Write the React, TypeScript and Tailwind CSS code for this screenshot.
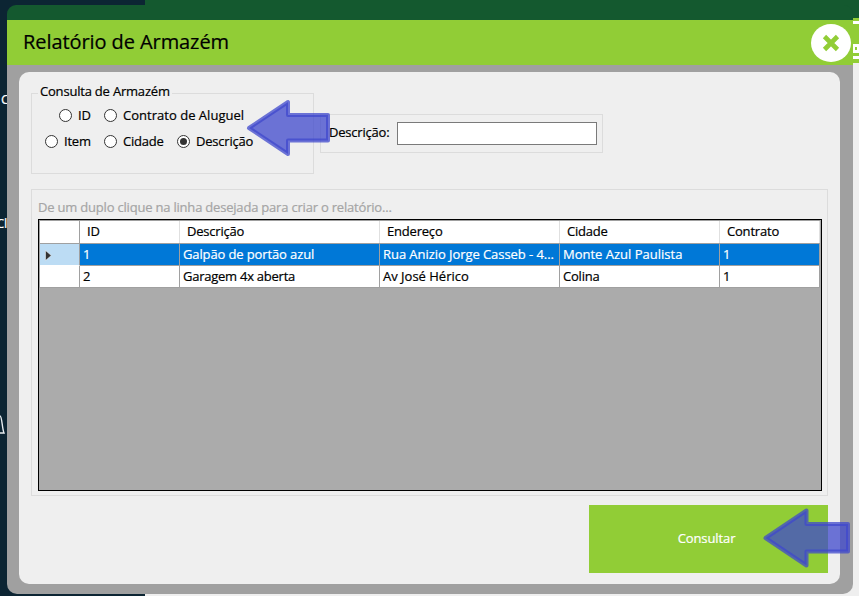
import React from "react";

const Radio = ({ checked = false }: { checked?: boolean }) => (
  <span className="flex h-[13px] w-[13px] shrink-0 items-center justify-center rounded-full border border-[#333] bg-white">
    {checked && <span className="h-[7px] w-[7px] rounded-full bg-[#333]" />}
  </span>
);

const Option = ({ label, className, checked }: { label: string; className: string; checked?: boolean }) => (
  <label className={`flex h-[18px] items-center gap-[6px] whitespace-nowrap ${className}`}>
    <Radio checked={checked} />
    <span>{label}</span>
  </label>
);

const Arrow = ({ className, path }: { className: string; path: string }) => (
  <svg className={`absolute ${className}`} width="90" height="64" viewBox="0 0 90 64">
    <path
      d={path}
      fill="#3f48cc"
      fillOpacity=".75"
      stroke="#3f48cc"
      strokeOpacity=".75"
      strokeWidth="4"
      strokeLinejoin="round"
    />
  </svg>
);

const columns = "grid grid-cols-[40px_100px_200px_180px_160px_100px]";
const headers = ["ID", "Descrição", "Endereço", "Cidade", "Contrato"];
const rows = [
  ["1", "Galpão de portão azul", "Rua Anizio Jorge Casseb - 4...", "Monte Azul Paulista", "1"],
  ["2", "Garagem 4x aberta", "Av José Hérico", "Colina", "1"],
];
const tracking = [
  ["", "tracking-[-0.12px]", "tracking-[-0.06px]", "tracking-[0px]", ""],
  ["", "tracking-[-0.25px]", "tracking-[0px]", "", ""],
];

export default function App() {
  return (
    <div className="relative h-[596px] w-[859px] overflow-hidden bg-[#efefef] font-['Open_Sans','Noto_Sans',sans-serif] text-[13px] leading-[18px] tracking-[-0.2px] text-black [-webkit-text-stroke:0.2px]">
      <div className="flex h-full">
        <aside className="w-[145px] bg-[#0c2533]" />
        <div className="flex-1">
          <div className="h-[18px] bg-[#14592f]" />
          <div className="h-[45px] bg-[#91cd36]" />
        </div>
      </div>
      <span className="absolute top-[90px] left-[1px] text-white">C</span>
      <span className="absolute top-[214px] -left-[4px] text-white">Cli</span>
      <svg className="absolute top-[413px] left-0" width="7" height="24" viewBox="0 0 7 24">
        <path d="M0 3 C2 3 2 15 4 20 H0" fill="none" stroke="#e8edf0" strokeWidth="1.4" />
      </svg>
      <svg className="absolute top-[18px] left-[853px]" width="6" height="45" viewBox="0 0 6 45">
        <path d="M0 3H6V6H0Z M0 26H6V29H2V32H6V35H0Z M4 29H6V32H4Z M0 38H6V41H0Z" fill="white" />
      </svg>

      <main className="absolute top-[5px] left-[7px] flex h-[589px] w-[846px] flex-col">
        <div className="h-[15px] shrink-0 rounded-t-[9px] bg-[#14592f]" />
        <header className="flex h-[45px] shrink-0 items-center justify-between bg-[#91cd36] pr-[2px] pl-4">
          <h1 className="-mt-[2px] text-[20px] leading-[28px] tracking-[-0.08px]">Relatório de Armazém</h1>
          <svg className="mt-[1px]" width="40" height="38" viewBox="0 0 40 38">
            <ellipse cx="20" cy="19" rx="20" ry="19" fill="white" />
            <path d="M13.5 12.5 L26.5 25.5 M26.5 12.5 L13.5 25.5" stroke="#91cd36" strokeWidth="4.6" />
          </svg>
        </header>
        <div className="flex-1 rounded-b-[10px] bg-[#a0a0a0] pt-[7px] pl-3">
          <section className="flex h-[512px] w-[821px] flex-col rounded-[10px] bg-[#efefef] px-3 pt-[10px]">
            <div className="flex h-[92px] gap-[6px]">
              <div className="flex w-[283px] flex-col">
                <div className="flex h-[18px] items-center">
                  <span className="mt-[3px] h-[7px] w-[7px] self-end border-t border-l border-[#dcdcdc]" />
                  <span className="px-[2px] whitespace-nowrap">Consulta de Armazém</span>
                  <span className="h-[7px] flex-1 self-end border-t border-r border-[#dcdcdc]" />
                </div>
                <div className="h-[74px] border-x border-b border-[#dcdcdc] pt-[6px]">
                  <div className="flex pl-[27px]">
                    <Option label="ID" className="w-[45px]" />
                    <Option label="Contrato de Aluguel" className="tracking-[0.02px]" />
                  </div>
                  <div className="mt-[8px] flex pl-[13px]">
                    <Option label="Item" className="w-[59px]" />
                    <Option label="Cidade" className="w-[73px]" />
                    <Option label="Descrição" className="" checked />
                  </div>
                </div>
              </div>
              <div className="mt-[32px] flex h-[39px] w-[283px] items-center border border-[#dcdcdc] pl-[8px]">
                <label className="-mt-[3px] w-[68px] whitespace-nowrap">Descrição:</label>
                <input className="h-[23px] w-[200px] border border-[#7a7a7a] bg-white outline-none" />
              </div>
            </div>

            <div className="mt-[15px] h-[307px] w-[797px] border border-[#dcdcdc] pt-[8px] pl-[6px]">
              <p className="h-[21px] text-[#a5a5a5]">De um duplo clique na linha desejada para criar o relatório...</p>
              <div className="h-[272px] w-[784px] border border-black bg-[#ababab]">
                <div className="w-[781px] border-t border-l border-[#a0a0a0]">
                  <div className={`${columns} h-[23px] border-b border-[#a0a0a0] bg-white`}>
                    <span className="border-r border-[#a0a0a0]" />
                    {headers.map((h) => (
                      <span key={h} className="border-r border-[#e0e0e0] pt-[1px] pl-[7px]">{h}</span>
                    ))}
                  </div>
                  {rows.map((row, i) => (
                    <div key={row[0]} className={`${columns} h-[22px] ${i === 0 ? "bg-[#0078d7] text-white" : "bg-white"}`}>
                      <span className={`flex items-center border-r border-b pl-[5px] ${i === 0 ? "border-r-[#a0a0a0] border-b-white bg-[#bcdcf4]" : "border-[#a0a0a0]"}`}>
                        {i === 0 && (
                          <svg className="mt-[2px]" width="7" height="11" viewBox="0 0 7 11">
                            <path d="M.5 .5 L6.3 5.5 L.5 10.5Z" fill="#333" stroke="white" strokeWidth=".5" />
                          </svg>
                        )}
                      </span>
                      {row.map((cell, n) => (
                        <span key={n} className={`overflow-hidden border-r border-b border-[#a0a0a0] pt-[1px] pl-[3px] whitespace-nowrap ${tracking[i][n]}`}>{cell}</span>
                      ))}
                    </div>
                  ))}
                </div>
              </div>
            </div>

            <button className="mt-[9px] h-[68px] w-[239px] self-end bg-[#91cd36] pr-[4px] pb-[2px] tracking-[-0.1px] text-white">Consultar</button>
          </section>
        </div>
      </main>
      <Arrow className="top-[97px] left-[244px]" path="M5 31 L44 5 V18 H84 V43.5 H44 V57 Z" />
      <Arrow className="top-[507px] left-[760px]" path="M5.5 31 L46.5 3.5 V17 H88 V44.5 H46.5 V58.5 Z" />
    </div>
  );
}
